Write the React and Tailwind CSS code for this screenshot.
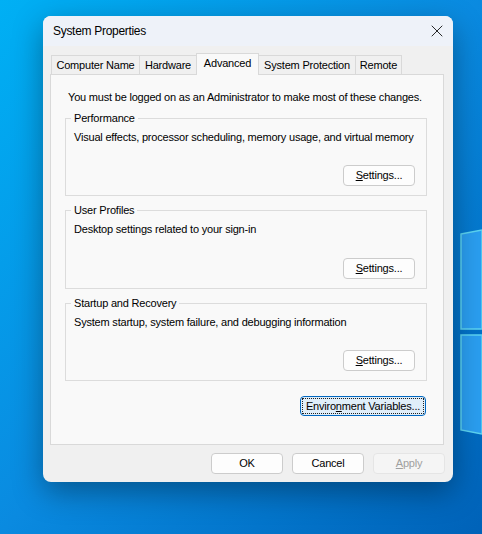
import { X } from 'lucide-react';

const font = { fontFamily: '"Segoe UI", "Liberation Sans", Arial, sans-serif' };

// Plain win32-style push button
const Button = ({ children, className = '', disabled, focused }) => {
  if (focused) {
    return (
      <div className={`h-[20px] rounded-[4px] border border-[#0067c0] bg-[#e0eef9] p-[1px] ${className}`}>
        <div className="flex h-full w-full items-center justify-center whitespace-nowrap border border-dotted border-[#202020] text-[11px] tracking-[-0.2px] text-black">
          {children}
        </div>
      </div>
    );
  }
  return (
    <div
      className={`flex h-[21px] items-center justify-center whitespace-nowrap rounded-[4px] border text-[11px] tracking-[-0.2px] ${
        disabled
          ? 'border-[#e5e5e5] bg-[#f5f5f5] text-[#a0a0a0]'
          : 'border-[#cccccc] bg-[#fdfdfd] text-black'
      } ${className}`}
    >
      {children}
    </div>
  );
};

const GroupBox = ({ label, text, height }) => (
  <div className={`relative ml-[14px] mr-[16px] border border-[#dcdcdc] ${height}`}>
    <div className="absolute -top-[8px] left-[5px] whitespace-nowrap bg-[#f9f9f9] px-[3px] text-[11px] leading-[14px] tracking-[-0.2px] text-black">
      {label}
    </div>
    <div className="whitespace-nowrap pl-[8px] pt-[11px] text-[11px] leading-[14px] tracking-[-0.2px] text-black">{text}</div>
    <div className="absolute bottom-[9px] right-[11px]">
      <Button className="w-[72px]">
        <span>
          <span className="underline">S</span>ettings...
        </span>
      </Button>
    </div>
  </div>
);

const tabs = [
  { name: 'Computer Name', w: 'w-[88px] border-l' },
  { name: 'Hardware', w: 'w-[57px] border-l' },
  { name: 'Advanced', w: 'w-[63px] border-x', active: true },
  { name: 'System Protection', w: 'w-[96px]' },
  { name: 'Remote', w: 'w-[47px] border-x' },
];

export default function App() {
  return (
    <div
      className="relative h-[534px] w-[482px] overflow-hidden bg-gradient-to-br from-[#00b0f4] via-[#0a8ae0] to-[#0062b8]"
      style={font}
    >
      {/* windows logo panes behind the dialog */}
      <svg className="absolute left-0 top-0" width="482" height="534">
        <polygon points="461,234 482,230 482,329 461,329" fill="#2a9ef0" stroke="#5cd4f2" strokeWidth="1.5" />
        <polygon points="461,335 482,335 482,434 461,430" fill="#2a9ef0" stroke="#5cd4f2" strokeWidth="1.5" />
      </svg>

      <div className="relative pl-[43px] pt-[16px]">
        <div className="w-[410px] overflow-hidden rounded-[8px] bg-[#f0f0f0] shadow-[0_10px_30px_rgba(0,0,0,0.35)]">
          {/* title bar */}
          <div className="flex h-[30px] items-center justify-between bg-[#eef2f9] pl-[10px] pr-[6px]">
            <span className="whitespace-nowrap text-[12px] tracking-[-0.3px] text-black">System Properties</span>
            <X size={20} strokeWidth={1} className="text-black" />
          </div>

          <div className="pl-[7px] pr-[9px] pt-[7px]">
            {/* tabs */}
            <div className="flex h-[21px] items-end pl-[1px]">
              {tabs.map((t) => (
                <div
                  key={t.name}
                  className={`flex items-center justify-center whitespace-nowrap border-t border-[#d9d9d9] text-[11px] tracking-[-0.2px] text-black ${t.w} ${
                    t.active
                      ? 'relative z-10 -mb-[1px] h-[22px] bg-[#f9f9f9] pb-[3px]'
                      : 'h-[19px] bg-[#f0f0f0]'
                  }`}
                >
                  {t.name}
                </div>
              ))}
            </div>

            {/* tab panel */}
            <div className="h-[371px] border border-[#d9d9d9] bg-[#f9f9f9]">
              <div className="whitespace-nowrap pl-[17px] pt-[15px] text-[11px] leading-[14px] tracking-[-0.2px] text-black">
                You must be logged on as an Administrator to make most of these changes.
              </div>
              <div className="flex flex-col gap-[14px] pt-[14px]">
                <GroupBox
                  label="Performance"
                  text="Visual effects, processor scheduling, memory usage, and virtual memory"
                  height="h-[78px]"
                />
                <GroupBox
                  label="User Profiles"
                  text="Desktop settings related to your sign-in"
                  height="h-[79px]"
                />
                <GroupBox
                  label="Startup and Recovery"
                  text="System startup, system failure, and debugging information"
                  height="h-[78px]"
                />
              </div>
              <div className="flex justify-end pr-[17px] pt-[15px]">
                <Button focused className="w-[126px]">
                  <span>
                    Enviro<span className="underline">n</span>ment Variables...
                  </span>
                </Button>
              </div>
            </div>

            {/* dialog buttons */}
            <div className="flex justify-end gap-[9px] pb-[8px] pt-[8px]">
              <Button className="w-[72px]">OK</Button>
              <Button className="w-[72px]">Cancel</Button>
              <Button disabled className="-mr-[1px] w-[72px]">
                <span>
                  <span className="underline">A</span>pply
                </span>
              </Button>
            </div>
          </div>
        </div>
      </div>
    </div>
  );
}
